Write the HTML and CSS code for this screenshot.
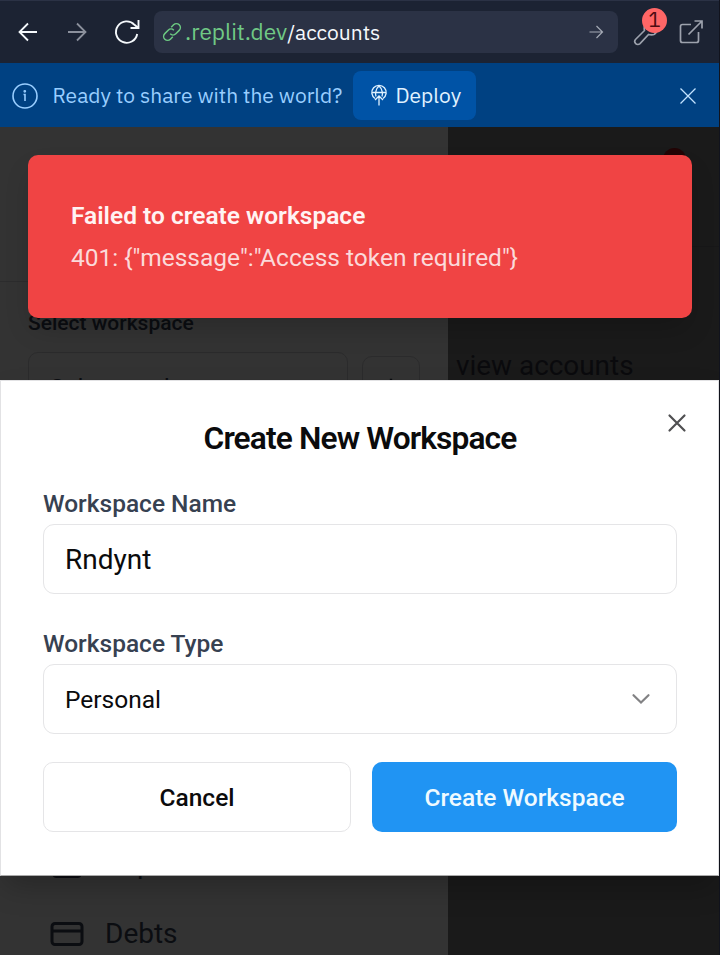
FILE: index.html
```html
<!DOCTYPE html>
<html lang="en">
<head>
<meta charset="utf-8">
<title>Accounts</title>
<link rel="stylesheet" href="styles.css">
</head>
<body>
<header class="browser">
  <svg class="nav-icon back" viewBox="0 0 24 24"><path d="M21 12H4M12 3.5 3.5 12l8.500 8.500"/></svg>
  <svg class="nav-icon forward" viewBox="0 0 24 24"><path d="M3 12h17M12 3.500l8.500 8.500-8.500 8.500"/></svg>
  <svg class="reload" viewBox="0 0 28 28"><path d="M24.200 16A10.700 10.700 0 1 1 21.500 6.800L25 9.800M25.500 2v8h-8"/></svg>
  <div class="address">
    <svg class="link" viewBox="0 0 20 20"><path d="M8.200 11.800a4 4 0 0 0 5.600 0l3.400-3.400a3.950 3.950 0 0 0-5.600-5.600L9.200 5.200M11.800 8.200a4 4 0 0 0-5.600 0l-3.400 3.400a3.950 3.950 0 0 0 5.600 5.600l2.400-2.400"/></svg>
    <span class="url"><span class="host">.replit.dev</span><span class="path">/accounts</span></span>
    <svg class="go" viewBox="0 0 16 16"><path d="M1.500 8h13M8.500 2l6 6-6 6"/></svg>
  </div>
  <div class="tools">
    <svg class="wrench" viewBox="0 0 28 28"><path d="M11.500 12.500 2.700 21.300a3 3 0 0 0 4.300 4.300l8.600-9.100c3 .8 6.500 0 8-2.700a8 8 0 0 0 .9-5l-4 3-4-1-1-4 3-4c-4.500 0-8.500 4-7 9.700z"/></svg>
    <span class="count">1</span>
  </div>
  <svg class="external" viewBox="0 0 26 26"><path d="M13 5.500H4.500a2 2 0 0 0-2 2v14a2 2 0 0 0 2 2h14a2 2 0 0 0 2-2V13M10.500 15.500 24 2M16.500 2H24v7.500"/></svg>
</header>
<div class="banner">
  <svg class="info" viewBox="0 0 26 26"><circle cx="13" cy="13" r="12"/><path d="M11.500 11.500H13V18"/><circle class="dot" cx="12.800" cy="8.300" r=".6"/></svg>
  <span class="banner-text">Ready to share with the world?</span>
  <span class="deploy">
    <svg class="globe" viewBox="0 0 16 21"><path d="M4 13.500A7.200 7.200 0 1 1 12 13.500M1 7.500h14M5 11.500C3.900 8.500 5 3.500 8 1c3 2.500 4.100 7.500 3 10.500M8 20.500V11M4 15l4-4 4 4"/></svg>
    <span class="deploy-text">Deploy</span>
  </span>
  <svg class="dismiss" viewBox="0 0 18 18"><path d="m1.500 1.500 15 15m0-15-15 15"/></svg>
</div>
<div class="app">
  <aside class="sidebar">
    <div class="brand"></div>
    <div class="switcher">
      <div class="switcher-label">Select workspace</div>
      <div class="switcher-row">
        <div class="switcher-select">Select workspace</div>
        <div class="switcher-add"><svg viewBox="0 0 24 24"><path d="M5 12h14M12 5v14"/></svg></div>
      </div>
    </div>
    <nav class="menu">
      <div class="menu-item"><svg viewBox="0 0 24 24"><rect x="3" y="3" width="18" height="18" rx="2"/></svg>Reports</div>
      <div class="menu-item"><svg viewBox="0 0 24 24"><rect x="2" y="5" width="20" height="14" rx="2"/><path d="M2 10h20"/></svg>Debts</div>
    </nav>
  </aside>
  <main class="main">
    <div class="main-head"><span class="alert-dot"></span></div>
    <p class="hint">view accounts</p>
  </main>
  <section class="modal">
    <svg class="close" viewBox="0 0 18 18"><path d="m1.500 1.500 15 15m0-15-15 15"/></svg>
    <h2>Create New Workspace</h2>
    <div class="label">Workspace Name</div>
    <div class="field name">Rndynt</div>
    <div class="label second">Workspace Type</div>
    <div class="field">Personal<svg class="chevron" viewBox="0 0 18 10"><path d="m1.500 1.200 7.500 7.300 7.500-7.300"/></svg></div>
    <div class="actions">
      <div class="button cancel">Cancel</div>
      <div class="button create">Create Workspace</div>
    </div>
  </section>
  <div class="toast">
    <div class="toast-title">Failed to create workspace</div>
    <div class="toast-text">401: {"message":"Access token required"}</div>
  </div>
</div>
</body>
</html>
```
FILE: styles.css
```css
* { box-sizing: border-box; }
body {
  margin: 0;
  width: 720px;
  height: 955px;
  overflow: hidden;
  background: #11131d;
  font-family: Roboto, "Liberation Sans", sans-serif;
  display: flex;
  flex-direction: column;
}
svg { display: block; flex: none; fill: none; stroke: currentColor; overflow: visible; }

.browser {
  height: 63px;
  width: 719px;
  flex: none;
  display: flex;
  align-items: center;
  border-top: 1px solid #2b3245;
  background: #1c2333;
  color: #f5f9fc;
  padding-left: 16px;
  font-family: "IBM Plex Sans", "Noto Sans", sans-serif;
}
.nav-icon { width: 24px; height: 24px; stroke-width: 1.8; }
.forward { margin-left: 25px; color: #8b909c; }
.reload { width: 28px; height: 28px; margin-left: 24px; stroke-width: 1.9; }
.address {
  width: 464px;
  height: 42px;
  margin-left: 13px;
  padding: 0 14px 0 8px;
  border-radius: 8px;
  background: #2b3245;
  display: flex;
  align-items: center;
}
.link { width: 20px; height: 20px; stroke-width: 1.5; color: #6cc982; }
.url { margin: -1px 0 0 3px; font-size: 22.700px; flex: 1; white-space: nowrap; }
.host { color: #70c985; }
.path { font-size: 21px; }
.go { width: 16px; height: 16px; stroke-width: 1.2; color: #a5aab5; }
.tools { position: relative; width: 28px; height: 28px; margin-left: 15px; color: #9da2ad; }
.wrench { width: 28px; height: 28px; stroke-width: 1.6; }
.count {
  position: absolute;
  left: 9px;
  top: -10px;
  width: 25px;
  height: 25px;
  border-radius: 50%;
  background: #ff6666;
  color: #4e0c12;
  font-size: 21px;
  line-height: 23px;
  text-align: center;
}
.external { width: 26px; height: 26px; margin-left: 17px; stroke-width: 1.7; color: #9da2ad; }

.banner {
  height: 64px;
  width: 719px;
  flex: none;
  background: #004182;
  color: #99ceff;
  display: flex;
  align-items: center;
  padding: 1px 22px 0 12px;
  font-family: "IBM Plex Sans", "Noto Sans", sans-serif;
  font-size: 21px;
}
.info { width: 26px; height: 26px; stroke-width: 1.6; }
.info .dot { fill: currentColor; }
.banner-text { margin: -2px 0 0 14.500px; width: 300.500px; white-space: nowrap; }
.deploy {
  width: 123px;
  height: 49px;
  border-radius: 8px;
  background: #0053a6;
  color: #e0f2ff;
  display: flex;
  align-items: center;
  padding-left: 17.500px;
}
.globe { width: 16px; height: 21px; stroke-width: 1.3; }
.deploy-text { margin: -2px 0 0 9px; }
.dismiss { width: 18px; height: 18px; margin-left: auto; stroke-width: 1.3; color: #c2e3ff; }

.app {
  position: relative;
  width: 719px;
  height: 828px;
  display: flex;
  background: #1a1a1a;
}
.sidebar { width: 448px; background: #333; color: #0b0d11; display: flex; flex-direction: column; }
.brand { height: 155px; border-bottom: 1px solid #2c2c2d; }
.switcher { padding: 27px 28px 0; }
.switcher-label { font-size: 21px; font-weight: 500; line-height: 28px; }
.switcher-row { display: flex; gap: 14px; margin-top: 15px; }
.switcher-select {
  width: 320px;
  height: 70px;
  border: 1px solid #2b2b2c;
  border-radius: 10px;
  padding: 0 21px;
  font-size: 24.500px;
  line-height: 69px;
}
.switcher-add {
  width: 58px;
  height: 62px;
  margin-top: 4px;
  border: 1px solid #2b2b2c;
  border-radius: 10px;
  display: grid;
  place-items: center;
}
.switcher-add svg { width: 28px; height: 28px; stroke-width: 2; }
.menu { margin-top: auto; padding: 0 48.500px 4px; }
.menu-item {
  height: 35px;
  margin-top: 35.500px;
  display: flex;
  align-items: center;
  gap: 20.500px;
  font-size: 28px;
}
.menu-item svg { width: 36px; height: 36px; stroke-width: 2; }
.main { flex: 1; color: #0a0a0d; }
.main-head { height: 120px; border-bottom: 1px solid #171718; position: relative; }
.alert-dot {
  position: absolute;
  left: 215px;
  top: 21px;
  width: 23px;
  height: 23px;
  border-radius: 50%;
  background: #230405;
}
.hint { margin: 101px 0 0 8px; font-size: 27.900px; line-height: 36px; white-space: nowrap; }

.toast {
  position: absolute;
  left: 28px;
  top: 28px;
  width: 664px;
  height: 163px;
  padding: 43px;
  border-radius: 10px;
  background: #f04444;
  color: #fff3f3;
  box-shadow: 0 14px 28px -5px rgba(0, 0, 0, .2);
  white-space: nowrap;
}
.toast-title { font-size: 24.500px; line-height: 36px; font-weight: 600; }
.toast-text { font-size: 24.500px; line-height: 36px; margin-top: 6px; color: #fbdada; }

.modal {
  position: absolute;
  left: 0;
  top: 253px;
  width: 719px;
  height: 496px;
  padding: 40px 41px 0 42px;
  background: #fff;
  border: 1px solid #e2e2e4;
  border-bottom-color: #aaa;
  box-shadow: 0 14px 28px -5px rgba(0, 0, 0, .25);
  color: #0b0b0c;
}
.modal h2 {
  margin: 0;
  text-align: center;
  font-size: 31.700px;
  line-height: 36px;
  font-weight: 600;
  letter-spacing: -.87px;
}
.close { position: absolute; right: 32px; top: 33px; width: 18px; height: 18px; stroke-width: 2.200; stroke-linecap: round; color: #505052; }
.label { margin-top: 32px; font-size: 24.500px; line-height: 29px; font-weight: 500; color: #374151; }
.label.second { margin-top: 35px; }
.field {
  height: 70px;
  margin-top: 6px;
  padding: 0 26px 0 21px;
  border: 1px solid #e5e5e7;
  border-radius: 11px;
  display: flex;
  align-items: center;
  justify-content: space-between;
  font-size: 24.500px;
}
.field.name { font-size: 28px; }
.chevron { width: 18px; height: 10px; stroke-width: 2.200; stroke-linecap: round; color: #828284; }
.actions { margin-top: 28px; display: grid; grid-template-columns: 308px 305px; gap: 21px; }
.button {
  height: 70px;
  border-radius: 10px;
  display: grid;
  place-items: center;
  font-size: 24.500px;
  font-weight: 500;
}
.cancel { border: 1px solid #e5e5e7; }
.create { background: #2094f3; color: #effaff; }
```
